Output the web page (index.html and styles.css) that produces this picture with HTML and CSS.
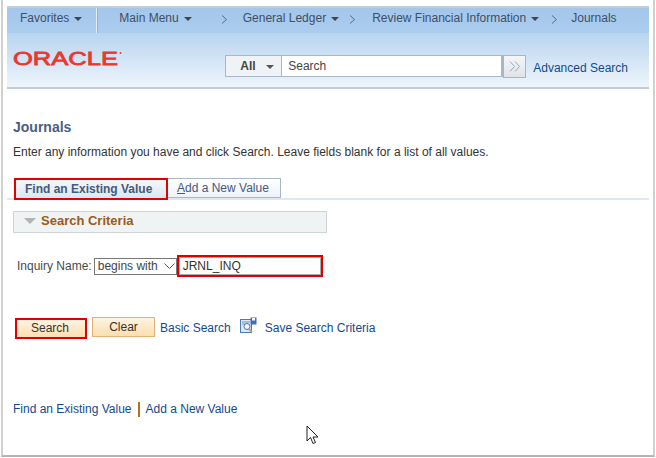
FILE: index.html
```html
<!DOCTYPE html>
<html lang="en">
<head>
<meta charset="utf-8">
<title>Journals</title>
<link rel="stylesheet" href="styles.css">
</head>
<body>
<div class="frame">
  <nav class="nav">
    <span class="nav-item fav">Favorites<i class="caret"></i></span>
    <span class="nav-sep"></span>
    <span class="nav-item main">Main Menu<i class="caret"></i></span>
    <svg class="chev chev-1" width="7" height="9" viewBox="0 0 7 9"><path d="M1 .5 5.500 4.500 1 8.500" fill="none" stroke="#5b6b80"/></svg>
    <span class="nav-item gl">General Ledger<i class="caret"></i></span>
    <svg class="chev chev-2" width="7" height="9" viewBox="0 0 7 9"><path d="M1 .5 5.500 4.500 1 8.500" fill="none" stroke="#5b6b80"/></svg>
    <span class="nav-item rfi">Review Financial Information<i class="caret"></i></span>
    <svg class="chev chev-3" width="7" height="9" viewBox="0 0 7 9"><path d="M1 .5 5.500 4.500 1 8.500" fill="none" stroke="#5b6b80"/></svg>
    <span class="nav-item jr">Journals</span>
  </nav>
  <header class="head">
    <svg class="logo" width="112" height="22" viewBox="0 0 112 22"><text x="0" y="17" textLength="105" lengthAdjust="spacingAndGlyphs" class="logo-text">ORACLE</text><circle cx="107.500" cy="5" r="1" fill="#e8392f"/></svg>
    <div class="search">
      <div class="scope"><b>All</b><i class="caret scope-caret"></i></div>
      <div class="search-field">Search</div>
      <div class="go"><svg width="12" height="11" viewBox="0 0 12 11"><path d="M1 .5 5.500 5.500 1 10.500M6 .5 10.500 5.500 6 10.500" fill="none" stroke="#9aa9ba"/></svg></div>
      <a class="adv">Advanced Search</a>
    </div>
  </header>
  <main class="content">
    <h1 class="title">Journals</h1>
    <p class="intro">Enter any information you have and click Search. Leave fields blank for a list of all values.</p>
    <div class="tabs">
      <div class="tab active">Find an Existing Value</div>
      <div class="tab"><u>A</u>dd a New Value</div>
    </div>
    <div class="criteria"><i class="tri"></i>Search Criteria</div>
    <div class="field-row">
      <label class="lbl">Inquiry Name:</label>
      <div class="select">begins with<svg width="11" height="6" viewBox="0 0 11 6"><path d="M.5.500 5.500 5.500 10.500.500" fill="none" stroke="#555"/></svg></div>
      <div class="input-hl"><div class="input">JRNL_INQ</div></div>
    </div>
    <div class="actions">
      <div class="btn-hl"><div class="btn search-btn">Search</div></div>
      <div class="btn clear">Clear</div>
      <a class="link basic">Basic Search</a>
      <svg class="save-icon" width="17" height="17" viewBox="0 0 17 17">
        <rect x=".5" y="2.500" width="11" height="13" fill="#dce8f8" stroke="#4a78c0"/>
        <path d="M2 5h8M2 7h3" stroke="#6d95d0"/>
        <circle cx="7" cy="9.500" r="3" fill="#eef5ff" stroke="#5a6f8f"/>
        <path d="M9 12l3 3" stroke="#c9a63a" stroke-width="2"/>
        <rect x="10.500" y=".5" width="6" height="7" fill="#3f6fb5"/>
        <rect x="12" y="1" width="3" height="2.500" fill="#fff"/>
      </svg>
      <a class="link save">Save Search Criteria</a>
    </div>
    <div class="foot">
      <a class="link">Find an Existing Value</a>
      <span class="foot-sep"></span>
      <a class="link">Add a New Value</a>
    </div>
  </main>
  <svg class="cursor" width="14" height="20" viewBox="0 0 14 20"><path d="M1 1v15l3.500-3.500 2.500 6 2.500-1-2.500-5.500h5z" fill="#fff" stroke="#222"/></svg>
</div>
</body>
</html>
```
FILE: styles.css
```css
* { box-sizing: border-box; }
html, body { margin: 0; padding: 0; background: #fff; }
body { width: 656px; height: 458px; overflow: hidden; font: 12px "Liberation Sans", Arial, sans-serif; color: #333; }
.frame {
  position: relative;
  width: 654px;
  height: 457px;
  margin-left: 1px;
  padding: 6px 4px 0 4px;
  border-left: 2px solid #d0d0d0;
  border-right: 2px solid #d0d0d0;
  border-bottom: 2px solid #b5b5b5;
  background: #fff;
}
.nav {
  height: 27px;
  display: flex;
  align-items: center;
  border-top: 2px solid #c6ccd4;
  background: linear-gradient(#a3c6ea, #abcdee);
  color: #3e4f68;
  padding-bottom: 6px;
}
.nav-item { display: flex; align-items: center; white-space: nowrap; }
.caret { display: inline-block; width: 0; height: 0; border: 4px solid transparent; border-top: 4px solid #444; border-bottom: 0; margin-left: 5px; margin-top: 2px; }
.fav { margin-left: 13px; }
.nav-sep { width: 2px; height: 25px; background: #e4eef8; margin: 6px 0 0 14px; border-right: 1px solid #8fb2d6; }
.main { margin-left: 21px; }
.chev { flex: none; margin-top: 3px; }
.chev-1 { margin-left: 29px; }
.gl { margin-left: 15px; }
.chev-2 { margin-left: 10px; }
.rfi { margin-left: 16px; }
.chev-3 { margin-left: 12px; }
.jr { margin-left: 13px; }
.head {
  height: 56px;
  display: flex;
  justify-content: space-between;
  border-bottom: 2px solid #c5cbd2;
  background: linear-gradient(#b8d4f0, #eef5fc);
}
.logo { margin: 15px 0 0 6px; }
.logo-text { font: 19px "Liberation Sans", Arial, sans-serif; fill: #e8392f; stroke: #e8392f; stroke-width: .8px; }
.search { display: flex; align-items: flex-start; margin: 22px 21px 0 0; }
.scope { width: 56px; height: 22px; display: flex; align-items: center; background: #eff3f6; border: 1px solid #a9b6c6; border-right: 0; padding-left: 14px; color: #444; }
.scope-caret { margin-left: 10px; border-top-color: #555; }
.search-field { width: 222px; height: 22px; line-height: 20px; background: #fff; border: 1px solid #a9b6c6; border-right-width: 2px; padding-left: 6px; color: #444; }
.go { width: 23px; height: 23px; display: flex; align-items: center; justify-content: center; background: linear-gradient(#f4f6f9, #dfe4ea); border: 1px solid #a9b6c6; }
.adv { margin: 6px 0 0 7px; color: #14498f; white-space: nowrap; }
.content { padding: 0 0 0 6px; }
.title { margin: 30px 0 0; font-size: 14px; line-height: 16px; font-weight: bold; color: #4a5d85; }
.intro { margin: 10px 0 0; line-height: 14px; color: #333; }
.tabs { display: flex; align-items: flex-start; height: 22px; margin: 19px 0 0 -6px; padding-left: 7px; background: linear-gradient(transparent 20px, #dfe7f3 20px); }
.tab { height: 20px; line-height: 18px; padding: 0 11px 0 9px; color: #47597a; background: linear-gradient(#fff, #eef2f8); border: 1px solid #a9b6c6; border-left: 0; white-space: nowrap; }
.tab.active { height: 22px; line-height: 18px; width: 154px; padding: 0 0 0 9px; font-weight: bold; background: linear-gradient(#f5f8fc, #dbe5f3); border: 2px solid #e00000; }
.criteria { display: flex; align-items: center; width: 314px; height: 22px; margin-top: 11px; padding: 0 0 3px 10px; font-size: 13px; font-weight: bold; color: #9c5a1c; background: #eff3f3; border: 1px solid #cfd3d3; }
.tri { width: 0; height: 0; border: 6px solid transparent; border-top: 6px solid #b3b3b3; border-bottom: 0; margin-right: 5px; }
.field-row { display: flex; align-items: center; height: 22px; margin: 22px 0 0 4px; }
.lbl { color: #4a4a4a; margin-right: 2px; white-space: nowrap; }
.select { display: flex; align-items: center; justify-content: space-between; width: 83px; height: 17px; padding: 0 1px 0 3px; border: 1px solid #777; color: #444; white-space: nowrap; }
.input-hl { width: 146px; height: 22px; border: 2px solid #e00000; }
.input { height: 18px; line-height: 16px; padding-left: 3px; border: 1px solid #aaa; color: #333; }
.actions { display: flex; align-items: flex-start; height: 23px; margin: 40px 0 0 2px; }
.btn-hl { width: 72px; height: 21px; margin-top: 1px; border: 2px solid #e00000; }
.btn { height: 17px; line-height: 16px; text-align: center; color: #333; background: linear-gradient(#fdf3e1, #fbdfb0); }
.search-btn { padding-right: 2px; }
.btn.clear { width: 63px; height: 20px; line-height: 18px; margin: 0 0 0 5px; border: 1px solid #e0b27a; }
.link { color: #14498f; white-space: nowrap; }
.basic { margin: 4px 0 0 5px; }
.save-icon { margin: 0 0 0 9px; }
.save { margin: 4px 0 0 8px; }
.foot { display: flex; align-items: center; height: 16px; margin-top: 61px; }
.foot-sep { width: 2px; height: 15px; margin: 0 6px; background: #b9701e; }
.cursor { position: absolute; left: 303px; top: 425px; }
```
